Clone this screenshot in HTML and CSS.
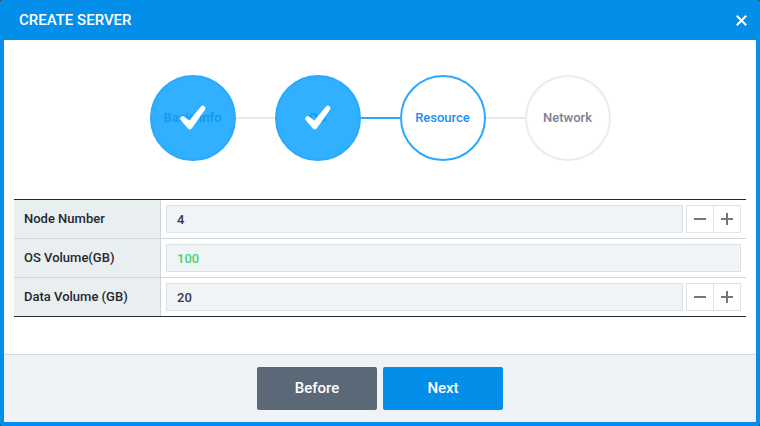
FILE: index.html
```html
<!DOCTYPE html>
<html lang="en">
<head>
<meta charset="utf-8">
<title>Create Server</title>
<link rel="stylesheet" href="styles.css">
</head>
<body>
<div class="dialog">
  <header class="dialog-header">
    <h1 class="title">CREATE SERVER</h1>
    <svg class="close" width="11" height="11" viewBox="0 0 11 11"><path d="M.8 .8L10.2 10.2M10.2 .8L.8 10.2"/></svg>
  </header>
  <main class="dialog-body">
    <div class="steps">
      <div class="step done"><span>Basic Info</span>
        <div class="cover"><svg width="28" height="26" viewBox="0 0 28 26"><path d="M3.7 13.7L10.8 21.9L23.9 3.2L10.8 18.9Z"/></svg></div>
      </div>
      <div class="line"></div>
      <div class="step done"><span>OS</span>
        <div class="cover"><svg width="28" height="26" viewBox="0 0 28 26"><path d="M3.7 13.7L10.8 21.9L23.9 3.2L10.8 18.9Z"/></svg></div>
      </div>
      <div class="line active"></div>
      <div class="step current"><span>Resource</span></div>
      <div class="line"></div>
      <div class="step"><span>Network</span></div>
    </div>
    <div class="form">
      <div class="row">
        <div class="label">Node Number</div>
        <div class="field">
          <div class="input">4</div>
          <div class="spinner">
            <div class="spin"><svg width="12" height="12"><path d="M0 6H12"/></svg></div>
            <div class="spin"><svg width="12" height="12"><path d="M0 6H12M6 0V12"/></svg></div>
          </div>
        </div>
      </div>
      <div class="row">
        <div class="label">OS Volume(GB)</div>
        <div class="field"><div class="input fixed">100</div></div>
      </div>
      <div class="row">
        <div class="label">Data Volume (GB)</div>
        <div class="field">
          <div class="input">20</div>
          <div class="spinner">
            <div class="spin"><svg width="12" height="12"><path d="M0 6H12"/></svg></div>
            <div class="spin"><svg width="12" height="12"><path d="M0 6H12M6 0V12"/></svg></div>
          </div>
        </div>
      </div>
    </div>
  </main>
  <footer class="dialog-footer">
    <button class="btn before">Before</button>
    <button class="btn next">Next</button>
  </footer>
</div>
</body>
</html>
```
FILE: styles.css
```css
* { box-sizing: border-box; }
body {
  margin: 0;
  background: #444;
  font-family: Roboto, "Liberation Sans", sans-serif;
  font-size: 13px;
  font-weight: 500;
}
svg { display: block; fill: none; }
.dialog {
  display: flex;
  flex-direction: column;
  height: 426px;
  border: 4px solid #028ee9;
  border-radius: 3px;
  background: #028ee9;
}
.dialog-header {
  display: flex;
  flex: none;
  align-items: center;
  justify-content: space-between;
  height: 36px;
  padding: 0 9px 4px 15px;
  color: #fff;
}
.title { margin: 0; font-size: 15px; font-weight: 500; line-height: 18px; }
.close { stroke: #fff; stroke-width: 2; }
.dialog-body {
  flex: 1;
  padding: 35px 10px 0;
  background: #fff;
}
.steps {
  display: flex;
  align-items: center;
  justify-content: center;
  margin-bottom: 38px;
}
.step {
  position: relative;
  display: flex;
  align-items: center;
  justify-content: center;
  width: 86px;
  height: 86px;
  border: 2px solid #e8ecf1;
  border-radius: 50%;
  color: #7c8190;
  line-height: 16px;
}
.line { width: 39px; height: 2px; background: #e4ebee; }
.line.active { background: #2aa9fd; }
.step.current { border-color: #2aa9fd; color: #1b8fee; }
.step.done { border-color: #2aa9fd; background: #31b0ff; color: #1099f2; }
.cover {
  position: absolute;
  inset: 0;
  display: flex;
  align-items: center;
  justify-content: center;
}
.cover svg { fill: #fff; stroke: #fff; stroke-width: 5; stroke-linejoin: round; }
.form { border-top: 1px solid #25282f; border-bottom: 1px solid #25282f; }
.row { display: flex; height: 38px; color: #25282f; }
.row + .row { height: 39px; border-top: 1px solid #d0d7dc; }
.label {
  width: 147px;
  padding: 11px 10px 0;
  border-right: 1px solid #d0d7dc;
  background: #e9eef0;
  line-height: 16px;
}
.field { display: flex; flex: 1; gap: 3px; padding: 5px; }
.input {
  flex: 1;
  height: 28px;
  padding: 1px 10px 0;
  border: 1px solid #dde2e7;
  background: #f0f4f7;
  color: #34384a;
  line-height: 26px;
}
.input.fixed { color: #45d36d; }
.spinner { display: flex; width: 55px; height: 28px; border: 1px solid #dde2e7; }
.spin { display: flex; align-items: center; justify-content: center; width: 26px; }
.spin + .spin { width: 27px; border-left: 1px solid #dde2e7; }
.spin path { stroke: #70777a; stroke-width: 2; }
.dialog-footer {
  display: flex;
  flex: none;
  justify-content: center;
  gap: 6px;
  height: 68px;
  padding-top: 12px;
  border-top: 1px solid #d3dade;
  background: #eff3f6;
}
.btn {
  width: 120px;
  height: 43px;
  padding: 0;
  border: 0;
  border-radius: 2px;
  color: #fff;
  font: 500 15px/43px Roboto, "Liberation Sans", sans-serif;
}
.before { background: #5b6877; }
.next { background: #028ee9; }
```
